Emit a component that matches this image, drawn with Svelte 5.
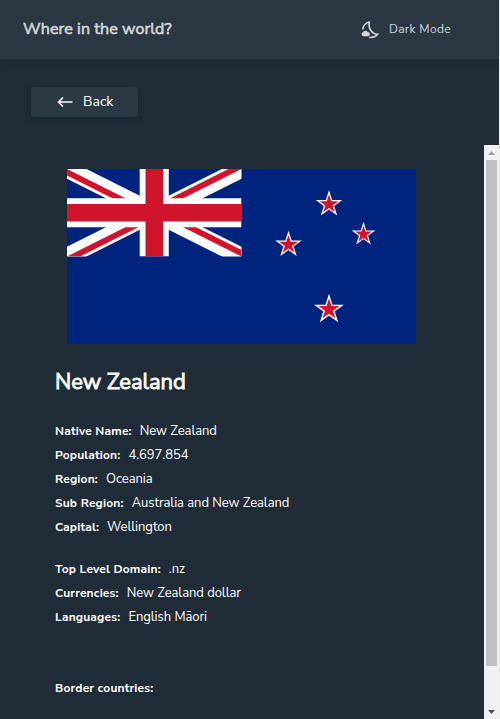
<script>
  const groups = [
    [
      ['Native Name', 'New Zealand'],
      ['Population', '4.697.854'],
      ['Region', 'Oceania'],
      ['Sub Region', 'Australia and New Zealand'],
      ['Capital', 'Wellington']
    ],
    [
      ['Top Level Domain', '.nz'],
      ['Currencies', 'New Zealand dollar'],
      ['Languages', 'English Māori']
    ]
  ];
  const star = '0,-9 2.02,-2.78 8.56,-2.78 3.27,1.06 5.29,7.28 0,3.44 -5.29,7.28 -3.27,1.06 -8.56,-2.78 -2.02,-2.78';
  const stars = [[262, 35.3, 1.1], [221.5, 75.8, 1.1], [296.5, 65.3, 0.98], [262, 140.5, 1.23]];
</script>

<div class="app">
  <header>
    <h1>Where in the world?</h1>
    <div class="mode">
      <svg width="18" height="18" viewBox="0 0 18 18">
        <path d="M8.7 .8C4.6 1.8 1.8 5 1.9 8.5M8.4 1C6.9 6.8 10.5 13 16.6 13.3C14.4 16 11.4 16.8 8.2 16.2" fill="none" stroke="currentColor" stroke-width="1.6" />
        <path d="M2.6 15.3a2.2 2.2 0 0 1-.4-4.3 2.7 2.7 0 0 1 4.6.1 2.1 2.1 0 0 1 0 4.2z" fill="currentColor" />
      </svg>
      <span>Dark Mode</span>
    </div>
  </header>
  <button>
    <svg width="16" height="12" viewBox="0 0 16 12"><path d="M15.5 6H2M6 1.5L1.5 6L6 10.5" fill="none" stroke="currentColor" stroke-width="1.6" /></svg>
    <span>Back</span>
  </button>
  <div class="pane">
    <main>
      <svg class="flag" width="349" height="175" viewBox="0 0 349 175">
        <rect width="349" height="175" fill="#00247d" />
        <svg width="174.5" height="87.5" viewBox="0 0 60 30" preserveAspectRatio="none">
          <clipPath id="saltire"><path d="M30 15h30v15zv15H0zH0V0zV0h30z" /></clipPath>
          <path d="M0 0l60 30m0-30L0 30" stroke="#fff" stroke-width="6" />
          <path d="M0 0l60 30m0-30L0 30" stroke="#cf142b" stroke-width="4" clip-path="url(#saltire)" />
          <path d="M30 0v30M0 15h60" stroke="#fff" stroke-width="10" />
          <path d="M30 0v30M0 15h60" stroke="#cf142b" stroke-width="6" />
        </svg>
        {#each stars as [x, y, s]}
          <g transform="translate({x} {y}) scale({s})">
            <polygon class="edge" points={star} />
            <polygon points={star} fill="#cf142b" />
          </g>
        {/each}
      </svg>
      <h2>New Zealand</h2>
      {#each groups as rows}
        <dl>
          {#each rows as [label, value]}
            <div class="row"><dt>{label}:</dt><dd>{value}</dd></div>
          {/each}
        </dl>
      {/each}
      <h3>Border countries:</h3>
    </main>
    <div class="scrollbar">
      <svg width="15" height="15"><path d="M4 10l3.5-4L11 10z" fill="#a3a3a3" /></svg>
      <div class="thumb"></div>
      <svg class="down" width="15" height="15"><path d="M4 6h7L7.5 10z" fill="#505050" /></svg>
    </div>
  </div>
</div>

<style>
  :global(body) { margin: 0; background: #e8eaeb; }
  .app { width: 499px; height: 719px; overflow: hidden; background: #202c37; color: #fff; font-family: 'Nunito Sans', Nunito, Lato, sans-serif; display: flex; flex-direction: column; }
  header { height: 59px; flex: none; box-sizing: border-box; padding: 0 48px 0 23px; background: #2b3743; color: #d4d7d9; display: flex; align-items: center; justify-content: space-between; box-shadow: 0 2px 6px #1d2933; }
  h1 { margin: 0 0 1px; font-size: 16px; line-height: 24px; font-weight: 400; letter-spacing: .1px; -webkit-text-stroke: .6px currentColor; }
  .mode { display: flex; align-items: center; gap: 10px; font-size: 12px; letter-spacing: .35px; }
  .mode span { margin-bottom: 1px; }
  button { flex: none; width: 107px; height: 30px; margin: 28px 0 0 31px; padding: 0 0 0 26px; border: 0; border-radius: 3px; background: #2b3945; color: #fff; font: 400 14px/20px 'Nunito Sans', Nunito, Lato, sans-serif; display: flex; align-items: center; gap: 10px; box-shadow: 0 2px 5px #19242d; }
  .pane { flex: none; height: 574px; margin-top: 28px; display: flex; }
  main { flex: 1; padding: 24px 0 0 55px; }
  .flag { display: block; margin-left: 12px; }
  .edge { fill: #fff; stroke: #fff; stroke-width: 2.3; stroke-miterlimit: 4; }
  h2 { margin: 22px 0 0; font-size: 22px; line-height: 32px; font-weight: 400; letter-spacing: -.06px; -webkit-text-stroke: .8px currentColor; }
  dl { margin: 21px 0 0; }
  dl + dl { margin-top: 18px; }
  .row { display: flex; height: 24px; align-items: center; }
  dt { font-size: 12px; font-weight: 700; margin-right: 8px; letter-spacing: .17px; }
  dd { margin: 0; font-size: 13px; letter-spacing: -.05px; }
  h3 { margin: 47px 0 0; font-size: 12px; line-height: 24px; font-weight: 700; letter-spacing: .17px; }
  .scrollbar { width: 15px; background: #f1f1f1; display: flex; flex-direction: column; }
  .scrollbar svg { display: block; flex: none; }
  .thumb { width: 11px; height: 506px; margin: 0 2px; background: #c1c1c1; }
  .down { margin-top: auto; }
</style>
